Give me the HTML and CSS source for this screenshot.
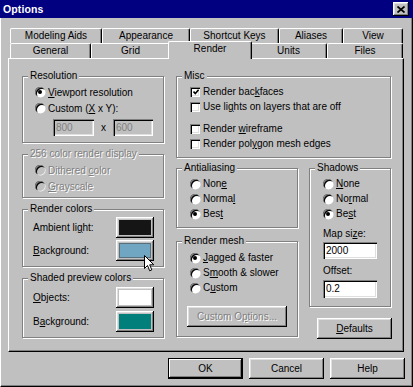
FILE: index.html
```html
<!DOCTYPE html>
<html>
<head>
<meta charset="utf-8">
<title>Options</title>
<link rel="stylesheet" href="styles.css">
</head>
<body>
<div class="window">
  <div class="titlebar">
    <span class="title">Options</span>
    <button class="close" aria-label="Close"><svg width="8" height="7" viewBox="0 0 8 7"><path d="M0.5 0.5 L7.5 6.5 M7.5 0.5 L0.5 6.5" stroke="#000" stroke-width="1.7" fill="none"/></svg></button>
  </div>
  <div class="client">
    <div class="tabs">
      <div class="tabrow">
        <div class="tab w-model">Modeling Aids</div>
        <div class="tab w-appear">Appearance</div>
        <div class="tab w-short">Shortcut Keys</div>
        <div class="tab w-alias">Aliases</div>
        <div class="tab w-view">View</div>
      </div>
      <div class="tabrow">
        <div class="tab w-general">General</div>
        <div class="tab w-grid">Grid</div>
        <div class="tab w-render selected">Render</div>
        <div class="tab w-units">Units</div>
        <div class="tab w-files">Files</div>
      </div>
    </div>

    <div class="panel">
      <div class="col col-left">
        <fieldset class="group g-res">
          <legend>Resolution</legend>
          <div class="gbody pad-res">
            <div class="opt"><span class="radio on"></span><span><u>V</u>iewport resolution</span></div>
            <div class="opt"><span class="radio"></span><span>Custom (<u>X</u> x Y):</span></div>
            <div class="dims">
              <span class="edit disabled w-800">800</span>
              <span class="by">x</span>
              <span class="edit disabled w-600">600</span>
            </div>
          </div>
        </fieldset>

        <fieldset class="group g-256">
          <legend class="dis">256 color render display</legend>
          <div class="gbody pad-res">
            <div class="opt"><span class="radio off"></span><span class="dis">Dithered <u>c</u>olor</span></div>
            <div class="opt"><span class="radio off"></span><span class="dis"><u>G</u>rayscale</span></div>
          </div>
        </fieldset>

        <fieldset class="group g-rc">
          <legend>Render colors</legend>
          <div class="gbody pad-rc">
            <div class="crow"><span>Ambient li<u>g</u>ht:</span><span class="swatch"><span class="fill c-black"></span></span></div>
            <div class="crow"><span><u>B</u>ackground:</span><span class="swatch focus"><span class="fill c-blue"></span>
              <svg class="cursor" width="11" height="17" viewBox="0 0 11 17"><path d="M0.5 0.5 V13.5 L3.5 10.5 L5.7 15.8 L7.8 14.9 L5.7 9.8 H9.8 Z" fill="#fff" stroke="#000" stroke-width="1" stroke-linejoin="miter"/></svg>
            </span></div>
          </div>
        </fieldset>

        <fieldset class="group g-sp">
          <legend>Shaded preview colors</legend>
          <div class="gbody pad-sp">
            <div class="crow"><span><u>O</u>bjects:</span><span class="swatch"><span class="fill c-white"></span></span></div>
            <div class="crow"><span>B<u>a</u>ckground:</span><span class="swatch"><span class="fill c-teal"></span></span></div>
          </div>
        </fieldset>
      </div>

      <div class="col col-right">
        <fieldset class="group g-misc">
          <legend>Misc</legend>
          <div class="gbody pad-misc">
            <div class="chk"><span class="checkbox"><svg width="6" height="6" viewBox="0 0 6 6"><path d="M0.5 2.5 L2.3 4.5 L5.6 0.8" stroke="#000" stroke-width="1.6" fill="none"/></svg></span><span>Render bac<u>k</u>faces</span></div>
            <div class="chk"><span class="checkbox"></span><span>Use li<u>g</u>hts on layers that are off</span></div>
            <div class="chk sep"><span class="checkbox"></span><span>Render <u>w</u>ireframe</span></div>
            <div class="chk"><span class="checkbox"></span><span>Render pol<u>y</u>gon mesh edges</span></div>
          </div>
        </fieldset>

        <div class="lower">
          <div class="sub sub-left">
            <fieldset class="group g-aa">
              <legend>Antialiasing</legend>
              <div class="gbody pad-aa">
                <div class="opt sm"><span class="radio"></span><span>Non<u>e</u></span></div>
                <div class="opt sm"><span class="radio"></span><span>Norma<u>l</u></span></div>
                <div class="opt sm"><span class="radio on"></span><span>Bes<u>t</u></span></div>
              </div>
            </fieldset>
            <fieldset class="group g-mesh">
              <legend>Render mesh</legend>
              <div class="gbody pad-mesh">
                <div class="opt sm"><span class="radio on"></span><span><u>J</u>agged &amp; faster</span></div>
                <div class="opt sm"><span class="radio"></span><span>S<u>m</u>ooth &amp; slower</span></div>
                <div class="opt sm"><span class="radio"></span><span>C<u>u</u>stom</span></div>
                <button class="btn btn-custom" disabled><span class="dis">Custom O<u>p</u>tions...</span></button>
              </div>
            </fieldset>
          </div>
          <div class="sub sub-right">
            <fieldset class="group g-shadow">
              <legend>Shadows</legend>
              <div class="gbody pad-aa">
                <div class="opt sm"><span class="radio"></span><span><u>N</u>one</span></div>
                <div class="opt sm"><span class="radio"></span><span>No<u>r</u>mal</span></div>
                <div class="opt sm"><span class="radio on"></span><span>Be<u>s</u>t</span></div>
                <div class="lbl lbl-map">Map si<u>z</u>e:</div>
                <span class="edit w-sh e-map">2000</span>
                <div class="lbl lbl-off">Offset:</div>
                <span class="edit w-sh e-off">0.2</span>
              </div>
            </fieldset>
            <button class="btn btn-defaults"><u>D</u>efaults</button>
          </div>
        </div>
      </div>
    </div>

    <div class="buttons">
      <button class="btn default">OK</button>
      <button class="btn">Cancel</button>
      <button class="btn">Help</button>
    </div>
  </div>
</div>
</body>
</html>
```

FILE: styles.css
```css
* { box-sizing: border-box; }

body {
  margin: 0;
  background: #c0c0c0;
  font-family: "Liberation Sans", Arial, sans-serif;
  font-size: 10px;
  color: #000;
}

u { text-decoration: underline; text-underline-offset: 1px; }

.window {
  width: 413px;
  height: 387px;
  display: flex;
  flex-direction: column;
  background: #c0c0c0;
}

/* title bar */
.titlebar {
  height: 18px;
  flex: none;
  background: #000080;
  color: #fff;
  display: flex;
  align-items: center;
  justify-content: space-between;
  padding: 0 4px 0 3px;
}
.title { font-weight: bold; font-size: 10.5px; letter-spacing: 0.1px; }
.close {
  width: 16px;
  height: 14px;
  padding: 0;
  border: 0;
  background: #c0c0c0;
  box-shadow: inset -1px -1px #000, inset 1px 1px #fff, inset -2px -2px #808080, inset 2px 2px #dfdfdf;
  display: flex;
  align-items: center;
  justify-content: center;
}

/* client area */
.client {
  flex: 1;
  border-left: 1px solid #fff;
  border-right: 1px solid #000;
  border-bottom: 1px solid #000;
  box-shadow: inset -1px -1px #808080;
  padding: 10px 7px 0 7px;
  display: flex;
  flex-direction: column;
}

/* tabs */
.tabrow {
  display: flex;
  height: 15px;
  padding-left: 2px;
}
.tab {
  height: 15px;
  border-top: 1px solid #fff;
  border-left: 1px solid #fff;
  border-right: 1px solid #000;
  box-shadow: inset -1px 0 #808080;
  border-radius: 2px 2px 0 0;
  text-align: center;
  line-height: 13px;
  background: #c0c0c0;
  white-space: nowrap;
}
.w-model { width: 92px; }
.w-appear { width: 88px; }
.w-short { width: 89px; }
.w-alias { width: 64px; }
.w-view { width: 60px; }
.w-general { width: 81px; }
.w-grid { width: 79px; }
.w-render { width: 84px; }
.w-units { width: 77px; }
.w-files { width: 76px; }
.tab.selected {
  height: 18px;
  margin: -2px -2px 0;
  line-height: 14px;
  position: relative;
  z-index: 2;
}

/* panel */
.panel {
  width: 396px;
  height: 294px;
  flex: none;
  border: 1px solid;
  border-color: #fff #000 #000 #fff;
  box-shadow: inset -1px -1px #808080;
  padding: 11px 11px 0 13px;
  display: flex;
  gap: 12px;
}
.col { display: flex; flex-direction: column; }
.col-left { width: 142px; gap: 5px; }
.col-right { width: 215px; }

/* group boxes */
.group {
  margin: 0;
  padding: 0;
  min-width: 0;
  border: 1px solid #808080;
  box-shadow: 1px 1px 0 #fff, inset 1px 1px 0 #fff;
}
.group legend {
  margin-left: 5px;
  padding: 0 2px;
  line-height: 12px;
  background: #c0c0c0;
  white-space: nowrap;
}
.g-res { height: 73px; }
.g-256 { height: 50px; }
.g-rc { height: 64px; }
.g-sp { height: 66px; }
.g-misc { height: 88px; }
.g-aa { height: 66px; }
.g-mesh { height: 102px; }
.g-shadow { height: 145px; }

.gbody { display: flex; flex-direction: column; }
.pad-res { padding: 2px 0 0 12px; }
.pad-rc { padding: 2px 9px 0 10px; gap: 2px; }
.pad-sp { padding: 3px 9px 0 10px; gap: 3px; }
.pad-misc { padding: 2px 0 0 13px; }
.pad-aa { padding: 2px 0 0 13px; }
.pad-mesh { padding: 3px 0 0 13px; }

.dis { color: #808080; text-shadow: 1px 1px 0 #fff; }

/* radio */
.opt {
  display: flex;
  align-items: center;
  gap: 3px;
  height: 16px;
  white-space: nowrap;
}
.opt.sm { height: 15px; }
.radio {
  flex: none;
  position: relative;
  width: 10px;
  height: 10px;
  border-radius: 50%;
  background: #fff;
  box-shadow: inset 1px 1px 0 #808080, inset 2px 2px 0 #000, 0.5px 0.5px 0 #fff;
}
.radio.off { background: #c0c0c0; }
.radio.on::after {
  content: "";
  position: absolute;
  left: 3px;
  top: 3px;
  width: 4px;
  height: 4px;
  border-radius: 50%;
  background: #000;
}

/* checkbox */
.chk {
  display: flex;
  align-items: center;
  gap: 3px;
  height: 15px;
  white-space: nowrap;
}
.chk.sep { margin-top: 7px; }
.checkbox {
  flex: none;
  width: 10px;
  height: 10px;
  background: #fff;
  box-shadow: inset 1px 1px #808080, inset 2px 2px #000, inset -1px -1px #fff, inset -2px -2px #dfdfdf;
  display: flex;
  align-items: center;
  justify-content: center;
  padding: 1px 0 0 1px;
}

/* edits */
.edit {
  display: block;
  height: 17px;
  background: #fff;
  box-shadow: inset 1px 1px #808080, inset 2px 2px #000, inset -1px -1px #fff, inset -2px -2px #dfdfdf;
  padding: 0 3px;
  line-height: 17px;
}
.edit.disabled { background: #c0c0c0; color: #808080; }
.dims { display: flex; margin: 3px 0 0 18px; }
.w-800 { width: 41px; }
.w-600 { width: 40px; }
.by { width: 19px; text-align: center; line-height: 17px; }
.w-sh { width: 54px; }
.lbl { height: 15px; line-height: 15px; white-space: nowrap; }
.lbl-map { margin-top: 5px; }
.e-map { margin-top: 1px; }
.lbl-off { margin-top: 4px; }
.e-off { margin-top: 2px; height: 18px; }

/* colour rows */
.crow {
  display: flex;
  align-items: center;
  justify-content: space-between;
  height: 21px;
}
.swatch {
  position: relative;
  display: block;
  width: 38px;
  height: 21px;
  padding: 3px;
  background: #c0c0c0;
  box-shadow: inset -1px -1px #000, inset 1px 1px #fff, inset -2px -2px #808080, inset 2px 2px #dfdfdf;
}
.fill { display: block; width: 100%; height: 100%; }
.c-black { background: #151515; }
.c-blue { background: #70a6c2; border: 1px solid #5a6f7c; }
.c-white { background: #fff; }
.c-teal { background: #007f7b; }
.cursor { position: absolute; left: 28px; top: 15px; }

/* lower right area */
.lower { display: flex; gap: 11px; margin-top: 4px; }
.sub { display: flex; flex-direction: column; }
.sub-left { width: 122px; gap: 7px; }
.sub-right { width: 82px; }

/* buttons */
.btn {
  width: 75px;
  height: 21px;
  padding: 0;
  border: 0;
  font: inherit;
  color: #000;
  background: #c0c0c0;
  box-shadow: inset -1px -1px #000, inset 1px 1px #fff, inset -2px -2px #808080, inset 2px 2px #dfdfdf;
  text-align: center;
}
.btn.default {
  box-shadow: inset 0 0 0 1px #000, inset -2px -2px #000, inset 2px 2px #fff, inset -3px -3px #808080;
}
.btn-custom { width: 100px; margin: 11px 0 0 -3px; }
.btn-defaults { margin: 11px 0 0 8px; }

.buttons {
  display: flex;
  justify-content: flex-end;
  gap: 6px;
  margin-top: 6px;
}
```
